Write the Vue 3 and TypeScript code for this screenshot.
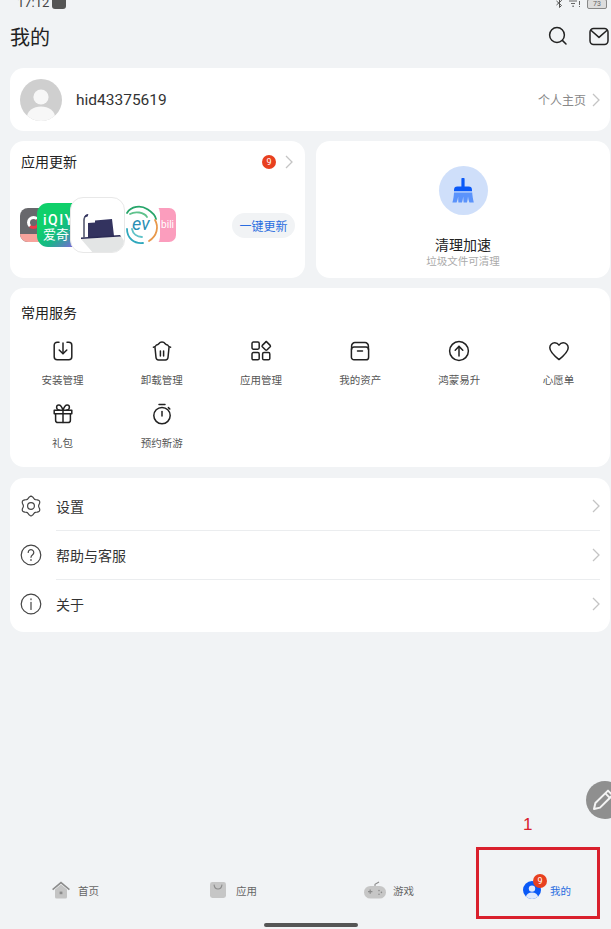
<script setup lang="ts">
interface IconItem {
  label: string
  paths: string[]
}

const services: IconItem[] = [
  { label: '安装管理', paths: ['M8 3.2H6.2a3 3 0 0 0-3 3v11.6a3 3 0 0 0 3 3h11.6a3 3 0 0 0 3-3V6.2a3 3 0 0 0-3-3H16', 'M12 4v10.5', 'M8.2 11l3.8 3.8 3.8-3.8'] },
  { label: '卸载管理', paths: ['M5 8.5l1 10a2.6 2.6 0 0 0 2.6 2.4h6.8a2.6 2.6 0 0 0 2.6-2.4l1-10', 'M3.4 8.2c1.6-.2 2.4-1 3-2.2 1-.1 1.7-.4 2.4-1.3a4 4 0 0 1 6.4 0c.7.9 1.4 1.2 2.4 1.3.6 1.2 1.4 2 3 2.2', 'M10.4 12v5', 'M13.6 12v5'] },
  { label: '应用管理', paths: ['M4.4 3h4.4A1.4 1.4 0 0 1 10.2 4.4v4.4a1.4 1.4 0 0 1-1.4 1.4H4.4A1.4 1.4 0 0 1 3 8.8V4.4A1.4 1.4 0 0 1 4.4 3z', 'M4.4 13.6h4.4a1.4 1.4 0 0 1 1.4 1.4v4.4a1.4 1.4 0 0 1-1.4 1.4H4.4A1.4 1.4 0 0 1 3 19.4V15a1.4 1.4 0 0 1 1.4-1.4z', 'M15 13.6h4.4a1.4 1.4 0 0 1 1.4 1.4v4.4a1.4 1.4 0 0 1-1.4 1.4H15a1.4 1.4 0 0 1-1.4-1.4V15a1.4 1.4 0 0 1 1.4-1.4z', 'M17.2 2.4l4 4a1 1 0 0 1 0 1.3l-3.3 3.3a1 1 0 0 1-1.3 0l-3.3-3.3a1 1 0 0 1 0-1.3l3.3-3.3a1 1 0 0 1 .6-.7z'] },
  { label: '我的资产', paths: ['M6 8h12a2.6 2.6 0 0 1 2.6 2.6v7.6a2.6 2.6 0 0 1-2.6 2.6H6a2.6 2.6 0 0 1-2.6-2.6v-7.6A2.6 2.6 0 0 1 6 8z', 'M3.6 10.4V7A3.4 3.4 0 0 1 7 3.6h10A3.4 3.4 0 0 1 20.4 7v3.4', 'M9.5 12h5'] },
  { label: '鸿蒙易升', paths: ['M12 2.6a9.4 9.4 0 1 0 0 18.8 9.4 9.4 0 0 0 0-18.8z', 'M12 17V7.6', 'M8.2 11.2L12 7.4l3.8 3.8'] },
  { label: '心愿单', paths: ['M12 20.6C6.5 16.2 2.8 12.9 2.8 8.8A5 5 0 0 1 7.8 3.8c1.7 0 3.2.8 4.2 2.3 1-1.5 2.5-2.3 4.2-2.3a5 5 0 0 1 5 5c0 4.1-3.7 7.4-9.2 11.8z'] },
  { label: '礼包', paths: ['M3.2 8.2h17.6v3.6H3.2z', 'M4.6 11.8v6.4a2.4 2.4 0 0 0 2.4 2.4h10a2.4 2.4 0 0 0 2.4-2.4v-6.4', 'M12 8.2v12.4', 'M12 8.2C10.8 4.4 9.4 3 7.8 3 6.4 3 5.6 4 5.6 5.2s1 3 3 3', 'M12 8.2C13.2 4.4 14.6 3 16.2 3c1.4 0 2.2 1 2.2 2.2s-1 3-3 3'] },
  { label: '预约新游', paths: ['M12 5.4a8.2 8.2 0 1 0 0 16.4 8.2 8.2 0 0 0 0-16.4z', 'M9 2.4h6', 'M12 9.6v4.4', 'M18.4 5.6l1.4 1.4'] }
]

// six rounded lobes around the centre
const gearPath = (): string => {
  const pts: string[] = []
  for (let i = 0; i < 72; i++) {
    const a = (i / 72) * Math.PI * 2
    const r = 8.7 + 1.1 * Math.cos(6 * a)
    pts.push(`${(12 + r * Math.sin(a)).toFixed(2)} ${(12 - r * Math.cos(a)).toFixed(2)}`)
  }
  return `M${pts.join('L')}z`
}

const settings: IconItem[] = [
  { label: '设置', paths: [gearPath(), 'M12 8.6a3.4 3.4 0 1 0 0 6.8 3.4 3.4 0 0 0 0-6.8z'] },
  { label: '帮助与客服', paths: ['M12 2.2a9.8 9.8 0 1 0 0 19.6 9.8 9.8 0 0 0 0-19.6z', 'M9.2 9.4a2.8 2.8 0 1 1 4.4 2.3c-1 .7-1.6 1.3-1.6 2.6', 'M12 16.6v.9'] },
  { label: '关于', paths: ['M12 2.2a9.8 9.8 0 1 0 0 19.6 9.8 9.8 0 0 0 0-19.6z', 'M12 10.4v7', 'M12 6.8v.9'] }
]

const tabs = [
  { label: '首页', icon: 'home' },
  { label: '应用', icon: 'bag' },
  { label: '游戏', icon: 'game' },
  { label: '我的', icon: 'me' }
]
</script>

<template>
  <div class="page">
    <div class="status-bar">
      <span class="time">17:12</span>
      <span class="status-app"></span>
      <span class="status-right">
        <svg width="7" height="11" viewBox="0 0 7 11" fill="none" stroke="#555" stroke-width="1"><path d="M0.5 3l5 4.5L3.5 9.5V.5l2 2-5 4.5" /></svg>
        <svg width="12" height="9" viewBox="0 0 12 9" fill="#666"><path d="M0 1.5h8v1H0zM2 4h4v1H2zM3.4 6.5h1.4v1.4H3.4zM10 2h1v4h-1zM10 7h1v1h-1z" /></svg>
        <span class="battery">73</span>
      </span>
    </div>

    <header class="header">
      <h1 class="title">我的</h1>
      <div class="header-actions">
        <svg width="20" height="20" viewBox="0 0 20 20" fill="none" stroke="#222" stroke-width="1.5" stroke-linecap="round"><circle cx="9" cy="9" r="7.4" /><path d="M14.6 14.6l3.4 3.4" /></svg>
        <svg width="20" height="19" viewBox="0 0 20 19" fill="none" stroke="#222" stroke-width="1.5" stroke-linejoin="round"><rect x="1" y="1.4" width="18" height="16" rx="3.6" /><path d="M1.6 3l8.4 7.4L18.4 3" /></svg>
      </div>
    </header>

    <main class="content">
      <section class="card profile">
        <svg class="avatar" width="42" height="42" viewBox="0 0 42 42">
          <defs><clipPath id="avatar-clip"><circle cx="21" cy="21" r="21" /></clipPath></defs>
          <circle cx="21" cy="21" r="21" fill="#cfcfcf" />
          <circle cx="21" cy="18" r="7.6" fill="#f7f7f7" />
          <ellipse cx="21" cy="38" rx="14" ry="10.6" fill="#f7f7f7" clip-path="url(#avatar-clip)" />
        </svg>
        <span class="user-id">hid43375619</span>
        <span class="profile-link">个人主页</span>
        <svg class="chevron" width="8" height="14" viewBox="0 0 8 14" fill="none" stroke="#c4c4c4" stroke-width="1.3"><path d="M1 1l6 6-6 6" /></svg>
      </section>

      <div class="two-col">
        <section class="card updates">
          <div class="updates-head">
            <span class="card-title">应用更新</span>
            <span class="badge">9</span>
            <svg class="chevron" width="8" height="14" viewBox="0 0 8 14" fill="none" stroke="#c4c4c4" stroke-width="1.3"><path d="M1 1l6 6-6 6" /></svg>
          </div>
          <div class="updates-body">
            <div class="app-stack">
              <div class="app app-gray"><span class="ring"></span><span class="strip"></span></div>
              <div class="app app-iqiyi"><span class="iq-a">iQIY</span><span class="iq-b">爱奇艺</span></div>
              <div class="app app-main">
                <svg width="55" height="56" viewBox="0 0 55 56">
                  <defs><clipPath id="main-clip"><rect width="55" height="56" rx="12" /></clipPath></defs>
                  <g clip-path="url(#main-clip)">
                    <path d="M10 41l40-3 5 8v10H23z" fill="#e3e5e5" />
                    <path d="M17 25l7-.6v-2l17-1.400 2 17-26 2z" fill="#33335f" />
                    <path d="M10 41v-1.400l39-2.600 1 1.600z" fill="#2b2b55" />
                    <path d="M12.200 40V23c0-4 1.400-6 4.800-6.600l-.4 1.400c-1.800.6-2.800 2-2.800 5V40z" fill="#555a70" />
                    <path d="M13 19.600c.6-2 2-3.400 4.400-3.600l-.8 2.400z" fill="#33335f" />
                  </g>
                </svg>
              </div>
              <div class="app app-ev">
                <svg width="35" height="44" viewBox="0 0 35 44" fill="none" stroke-width="1.800" stroke-linecap="round">
                  <path d="M2 10C6 3 16 2 22 6c4 2.600 8 5 9 10" stroke="#27a56a" />
                  <path d="M5 11c5-3 14-2 17 3" stroke="#5fc28c" />
                  <path d="M30 17c4 7 2 16-6 21" stroke="#e8984a" />
                  <path d="M2 26c0 9 7 15 16 14" stroke="#2fa8bd" />
                  <path d="M7 26c1 5 5 8 10 8" stroke="#5fc2c8" />
                </svg>
                <span class="ev-text">ev</span>
              </div>
              <div class="app app-bili"><span>bili</span></div>
            </div>
            <button class="update-btn">一键更新</button>
          </div>
        </section>

        <section class="card clean">
          <div class="clean-icon">
            <svg width="22" height="26" viewBox="0 0 22 26">
              <path d="M9.4 1.2a1.6 1.6 0 0 1 3.2 0V8.6h4a3.4 3.4 0 0 1 3.4 3.4v1.2H2V12a3.4 3.4 0 0 1 3.4-3.4h4z" fill="#0a59f7" />
              <path d="M2 14.4h18.2c.2 3.6.8 6.6 1.6 10.2h-4.400c-.8-2-1.200-4-1.400-6-.2 2-.4 4-1 6H11.600c-.2-2-.2-4-.4-6-.2 2-.6 4-1.200 6H6.400c-.2-2-.2-4-.2-6-.4 2-.8 4-1.600 6H.4C1.400 21 1.800 18 2 14.400z" fill="#5b93fb" />
            </svg>
          </div>
          <div class="clean-title">清理加速</div>
          <div class="clean-sub">垃圾文件可清理</div>
        </section>
      </div>

      <section class="card services">
        <div class="card-title">常用服务</div>
        <div class="service-grid">
          <div v-for="s in services" :key="s.label" class="service">
            <svg width="24" height="24" viewBox="0 0 24 24" fill="none" stroke="#222" stroke-width="1.5" stroke-linecap="round" stroke-linejoin="round">
              <path v-for="d in s.paths" :key="d" :d="d" />
            </svg>
            <span class="service-label">{{ s.label }}</span>
          </div>
        </div>
      </section>

      <section class="card settings">
        <div v-for="(row, i) in settings" :key="row.label" class="setting-row">
          <svg width="24" height="24" viewBox="0 0 24 24" fill="none" stroke="#444" stroke-width="1.2" stroke-linecap="round" stroke-linejoin="round">
            <path v-for="d in row.paths" :key="d" :d="d" />
          </svg>
          <div class="setting-body" :class="{ divided: i < settings.length - 1 }">
            <span>{{ row.label }}</span>
            <svg class="chevron" width="8" height="14" viewBox="0 0 8 14" fill="none" stroke="#c4c4c4" stroke-width="1.3"><path d="M1 1l6 6-6 6" /></svg>
          </div>
        </div>
      </section>
    </main>

    <nav class="tabbar">
      <div v-for="t in tabs" :key="t.label" class="tab" :class="[t.icon, { active: t.icon === 'me' }]">
        <span class="tab-icon">
          <svg v-if="t.icon === 'home'" width="18" height="18" viewBox="0 0 18 18">
            <path d="M3 8.5L9 3.6l6 4.9V16a1.6 1.6 0 0 1-1.6 1.6H4.6A1.6 1.6 0 0 1 3 16z" fill="#c4c4c4" />
            <path d="M.6 8.6L9 1.6l8.4 7" fill="none" stroke="#8c8c8c" stroke-width="1.6" />
            <rect x="7.6" y="10.6" width="2.8" height="2.6" fill="#8c8c8c" />
          </svg>
          <svg v-else-if="t.icon === 'bag'" width="16" height="16" viewBox="0 0 16 16">
            <rect width="16" height="16" rx="2.4" fill="#c6c6c6" />
            <path d="M4 2.6c.4 3 1.8 4.4 4 4.400s3.600-1.400 4-4.400" fill="none" stroke="#8c8c8c" stroke-width="1.1" />
          </svg>
          <svg v-else-if="t.icon === 'game'" width="22" height="18" viewBox="0 0 22 18">
            <rect y="5" width="22" height="12.6" rx="6.3" fill="#c6c6c6" />
            <path d="M11 5V3.4L15 1" fill="none" stroke="#8c8c8c" stroke-width="1.1" />
            <path d="M4 10.6h4.4M6.2 8.4v4.4" stroke="#8c8c8c" stroke-width="1.3" />
            <circle cx="15" cy="9.6" r=".8" fill="#8c8c8c" /><circle cx="17.4" cy="11.4" r=".8" fill="#8c8c8c" /><circle cx="15" cy="13.2" r=".8" fill="#8c8c8c" />
          </svg>
          <span v-else class="me-icon">
            <svg width="18" height="18" viewBox="0 0 18 18">
              <defs><clipPath id="me-clip"><circle cx="9" cy="9" r="9" /></clipPath></defs>
              <circle cx="9" cy="9" r="9" fill="#0a59f7" />
              <circle cx="9" cy="7.6" r="3.2" fill="#dfe9fd" />
              <ellipse cx="9" cy="16" rx="6" ry="4.6" fill="#dfe9fd" clip-path="url(#me-clip)" />
            </svg>
            <span class="me-badge">9</span>
          </span>
        </span>
        <span class="tab-label">{{ t.label }}</span>
      </div>
    </nav>
    <div class="home-row"><span class="home-bar"></span></div>

    <div class="fab">
      <svg width="24" height="24" viewBox="0 0 24 24" fill="none" stroke="#f4f4f4" stroke-width="2" stroke-linejoin="round">
        <path d="M3 21l1.4-6L17 2.6l4.6 4.6L9 19.6z" />
        <path d="M14.4 5.4l4.2 4.2" />
      </svg>
    </div>
    <span class="mark-num">1</span>
    <div class="mark-box"></div>
  </div>
</template>

<style scoped>
.page {
  position: relative;
  width: 611px;
  height: 929px;
  overflow: hidden;
  display: flex;
  flex-direction: column;
  background: #f1f3f5;
  color: #222;
  font-family: Roboto, "Noto Sans CJK SC", sans-serif;
}

.status-bar {
  height: 12px;
  flex-shrink: 0;
  display: flex;
  align-items: flex-end;
  padding: 0 4px 3px 17px;
  box-sizing: border-box;
  gap: 3px;
}

.time {
  font-size: 13px;
  line-height: 13px;
  color: #444;
}

.status-app {
  width: 14px;
  height: 12px;
  background: #555;
  border-radius: 3px;
}

.status-right {
  margin-left: auto;
  display: flex;
  align-items: center;
  gap: 6px;
}

.battery {
  width: 20px;
  height: 10px;
  box-sizing: border-box;
  border: 1px solid #888;
  border-radius: 2px;
  background: #ddd;
  font-size: 7px;
  line-height: 8px;
  text-align: center;
  color: #666;
}

.header {
  height: 48px;
  margin-bottom: 8px;
  flex-shrink: 0;
  display: flex;
  align-items: center;
  padding: 0 2px 0 10px;
}

.title {
  margin: 0;
  font-size: 20px;
  font-weight: 400;
}

.header-actions {
  margin-left: auto;
  display: flex;
  align-items: center;
  gap: 21px;
}

.content {
  display: flex;
  flex-direction: column;
  padding: 0 1px 0 10px;
}

.card {
  background: #fff;
  border-radius: 14px;
}

.card-title {
  font-size: 14px;
  line-height: 20px;
}

.chevron {
  flex-shrink: 0;
}

.profile {
  height: 63px;
  display: flex;
  align-items: center;
  padding: 0 10px;
}

.user-id {
  margin-left: 14px;
  font-size: 15.5px;
  color: #333;
}

.profile-link {
  margin-left: auto;
  margin-right: 6px;
  font-size: 12px;
  color: #888;
}

.two-col {
  display: grid;
  grid-template-columns: 295px 294px;
  gap: 11px;
  margin-top: 10px;
}

.updates {
  height: 137px;
  padding: 11px 12px 0 11px;
  box-sizing: border-box;
}

.updates-head {
  display: flex;
  align-items: center;
  height: 20px;
}

.badge {
  margin-left: auto;
  margin-right: 9px;
  width: 14px;
  height: 14px;
  border-radius: 50%;
  background: #e8401f;
  color: #fff;
  font-size: 9px;
  line-height: 14px;
  text-align: center;
}

.updates-body {
  display: flex;
  align-items: center;
  justify-content: space-between;
  margin-top: 25px;
  height: 56px;
}

.app-stack {
  display: flex;
  align-items: center;
  margin-left: -1px;
}

.app {
  position: relative;
  overflow: hidden;
  flex-shrink: 0;
}

.app-gray {
  width: 24px;
  height: 34px;
  background: #68686c;
  border-radius: 8px 0 0 8px;
}

.ring {
  position: absolute;
  left: 7px;
  top: 8px;
  width: 13px;
  height: 13px;
  border: 3px solid #fff;
  border-right-color: #ee3a4a;
  border-bottom-color: #ee3a4a;
  border-radius: 50%;
  box-sizing: border-box;
}

.strip {
  position: absolute;
  left: 0;
  right: 0;
  bottom: 0;
  height: 8px;
  background: #f7a39c;
}

.app-iqiyi {
  width: 44px;
  height: 44px;
  margin-left: -7px;
  z-index: 1;
  border-radius: 11px 0 0 11px;
  background: linear-gradient(140deg, #0fd06a 35%, #16b885 62%, #7a68d8 92%);
  color: #fff;
  box-sizing: border-box;
  padding: 10px 0 0 6px;
  white-space: nowrap;
}

.iq-a {
  display: block;
  font-size: 14px;
  line-height: 14px;
  font-weight: 500;
  letter-spacing: 1.5px;
}

.iq-b {
  display: block;
  font-size: 13px;
  line-height: 15px;
}

.app-main {
  width: 55px;
  height: 56px;
  margin-left: -11px;
  z-index: 3;
  background: #fff;
  border: 1px solid #e8e8e8;
  border-radius: 13px;
  box-sizing: border-box;
}

.app-ev {
  width: 35px;
  height: 44px;
  background: #fff;
  z-index: 2;
  border-radius: 0 10px 10px 0;
}

.app-ev svg {
  position: absolute;
  left: 0;
  top: 0;
}

.ev-text {
  position: absolute;
  left: 7px;
  top: 11px;
  font-size: 18px;
  font-style: italic;
  line-height: 20px;
  color: #2a8fb5;
}

.app-bili {
  width: 18px;
  height: 34px;
  margin-left: -2px;
  background: #fb9dbd;
  border-radius: 0 7px 7px 0;
  color: #fff;
  font-size: 10px;
  line-height: 34px;
  text-align: right;
  padding-right: 2px;
  box-sizing: border-box;
}

.update-btn {
  width: 63px;
  height: 25px;
  margin-right: -2px;
  padding: 0;
  border: none;
  border-radius: 13px;
  background: #f1f3f5;
  color: #2a6de0;
  font-size: 12px;
  font-family: inherit;
}

.clean {
  height: 137px;
  display: flex;
  flex-direction: column;
  align-items: center;
  padding-top: 25px;
  box-sizing: border-box;
}

.clean-icon {
  width: 49px;
  height: 49px;
  border-radius: 50%;
  background: #cfdffa;
  display: flex;
  align-items: center;
  justify-content: center;
}

.clean-title {
  margin-top: 20px;
  font-size: 14px;
  line-height: 20px;
}

.clean-sub {
  font-size: 10.5px;
  line-height: 13px;
  color: #aaa;
}

.services {
  margin-top: 10px;
  height: 179px;
  padding-top: 15px;
  box-sizing: border-box;
}

.services .card-title {
  padding-left: 11px;
}

.service-grid {
  display: grid;
  grid-template-columns: repeat(6, 99.2px);
  row-gap: 14px;
  margin-top: 16px;
  padding-left: 3px;
}

.service {
  display: flex;
  flex-direction: column;
  align-items: center;
  gap: 11px;
}

.service-label {
  font-size: 10.5px;
  line-height: 14px;
  color: #555;
}

.settings {
  margin-top: 11px;
  padding: 3px 10px 4px 9px;
}

.setting-row {
  height: 49px;
  display: flex;
  align-items: center;
  gap: 13px;
}

.setting-body {
  flex: 1;
  height: 100%;
  box-sizing: border-box;
  display: flex;
  align-items: center;
  justify-content: space-between;
  font-size: 14px;
  color: #333;
}

.setting-body.divided {
  box-shadow: 0 1px 0 #ebedef;
}

.tabbar {
  margin-top: auto;
  height: 56px;
  flex-shrink: 0;
  display: grid;
  grid-template-columns: 158px 154px 159px auto;
  padding-left: 52px;
  align-items: center;
}

.tab {
  display: flex;
  align-items: center;
  gap: 8px;
  font-size: 10.5px;
  color: #666;
}

.tab.bag {
  gap: 10px;
}

.tab.game {
  gap: 7px;
}

.tab.active {
  color: #2a6de0;
  gap: 9px;
}

.tab-icon {
  display: flex;
}

.me-icon {
  position: relative;
  display: flex;
}

.me-badge {
  position: absolute;
  top: -7px;
  right: -6px;
  width: 14px;
  height: 14px;
  border-radius: 50%;
  background: #e8401f;
  color: #fff;
  font-size: 9px;
  line-height: 14px;
  text-align: center;
}

.home-row {
  height: 11px;
  flex-shrink: 0;
  display: flex;
  justify-content: center;
  padding: 5px 0 0 10px;
  box-sizing: border-box;
}

.home-bar {
  width: 94px;
  height: 4px;
  border-radius: 2px;
  background: #555;
}

.fab {
  position: absolute;
  left: 586px;
  top: 781px;
  width: 38px;
  height: 38px;
  border-radius: 50%;
  background: #8f8f8f;
  display: flex;
  align-items: center;
  padding-left: 5px;
  box-sizing: border-box;
}

.mark-num {
  position: absolute;
  left: 523px;
  top: 815px;
  font-size: 17px;
  line-height: 20px;
  color: #d9202c;
  font-family: "Liberation Sans", sans-serif;
}

.mark-box {
  position: absolute;
  left: 476px;
  top: 847px;
  width: 124px;
  height: 72px;
  box-sizing: border-box;
  border: 3px solid #d9202c;
}
</style>
